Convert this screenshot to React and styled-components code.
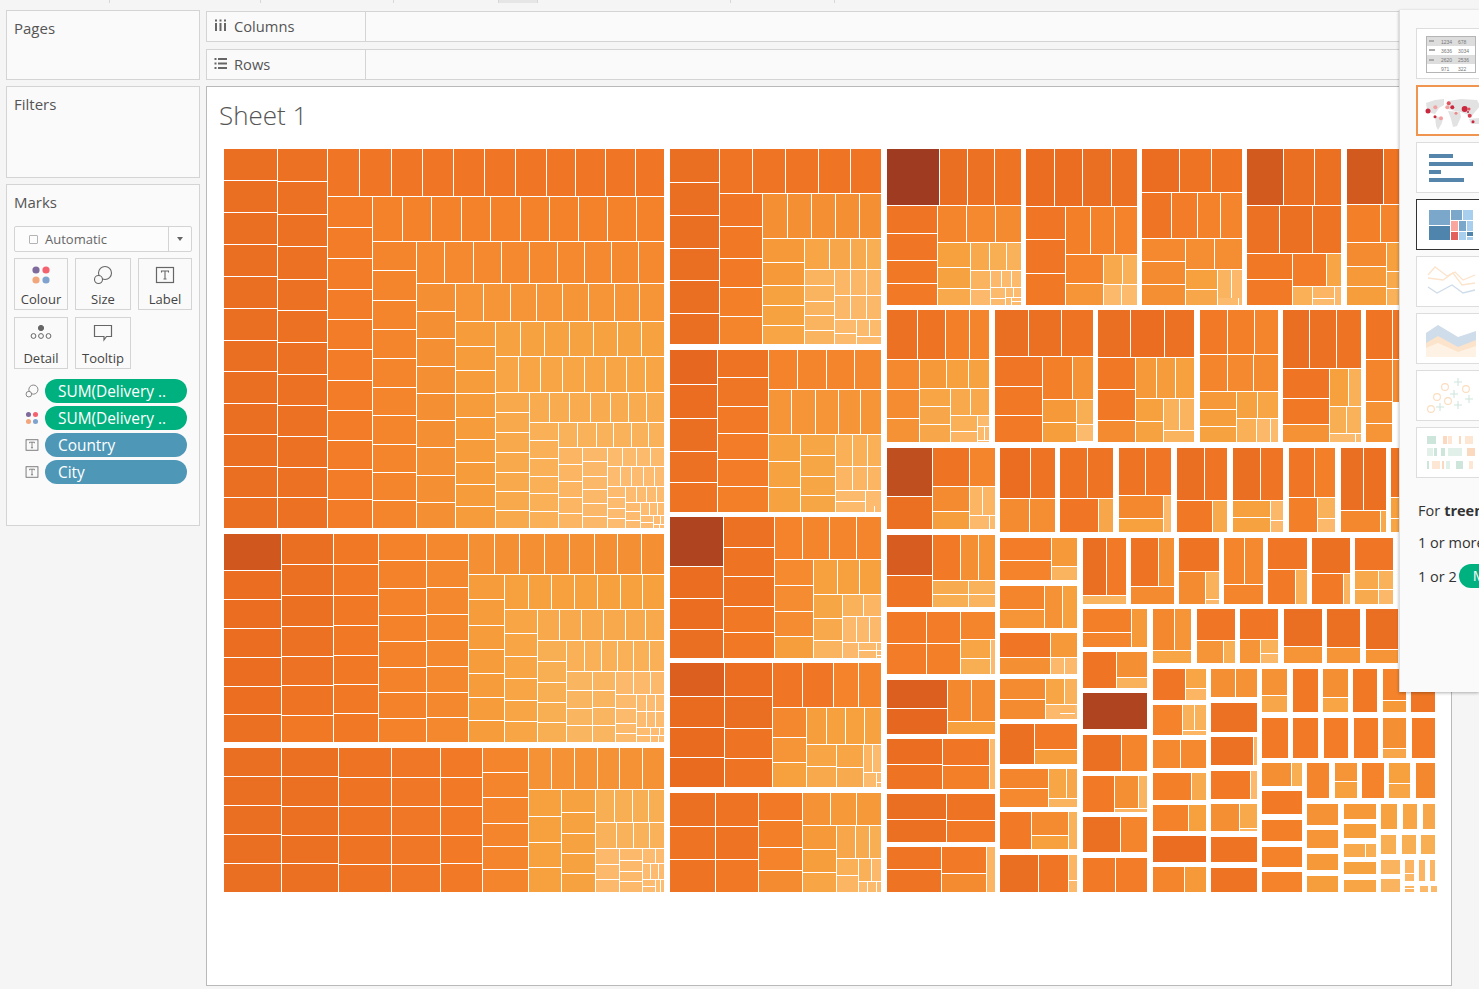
import React from 'react';
import styled, { createGlobalStyle } from 'styled-components';

const GlobalStyle = createGlobalStyle`
    html, body {
        margin: 0;
        height: 100%;
        overflow: hidden;
        background: #F5F5F5;
        font-family: "Open Sans", "Liberation Sans", sans-serif;
    }
`;

const Page = styled.div`
    position: relative;
    width: 1479px;
    height: 989px;
    overflow: hidden;
`;

const TopBar = styled.div`
    display: flex;
    height: 10px;
    align-items: flex-start;
`;

const TopTab = styled.div`
    flex: none;
    width: ${(p) => p.$w}px;
    height: 3px;
    box-sizing: border-box;
    border-right: 1px solid #D8D8D8;
    background: ${(p) => (p.$on ? '#E6E6E6' : 'transparent')};
`;

const Main = styled.div`
    display: flex;
    gap: 6px;
    padding-left: 6px;
`;

const LeftColumn = styled.div`
    flex: none;
    width: 194px;
    display: flex;
    flex-direction: column;
    gap: 6px;
`;

const Card = styled.div`
    box-sizing: border-box;
    height: ${(p) => p.$h}px;
    padding: 0 7px;
    background: #FAFAFA;
    border: 1px solid #D4D4D4;
`;

const CardTitle = styled.div`
    font-size: 15px;
    line-height: 20px;
    padding-top: 7px;
    color: #555;
`;

const TypeSelect = styled.div`
    display: flex;
    align-items: center;
    height: 24px;
    margin-top: 14px;
    background: #FCFCFC;
    border: 1px solid #D4D4D4;
    border-radius: 2px;
    font-size: 13px;
    color: #666;
`;

const TypeBox = styled.span`
    width: 7px;
    height: 7px;
    margin: 0 7px 0 14px;
    border: 1px solid #B4B4B4;
    border-radius: 1px;
`;

const TypeName = styled.span`
    flex: 1;
`;

const TypeCaret = styled.span`
    display: flex;
    align-items: center;
    justify-content: center;
    align-self: stretch;
    width: 22px;
    border-left: 1px solid #D4D4D4;
    &::after {
        content: '';
        border-left: 3.5px solid transparent;
        border-right: 3.5px solid transparent;
        border-top: 4px solid #666;
    }
`;

const MarkGrid = styled.div`
    display: grid;
    grid-template-columns: 54px 56px 54px;
    grid-auto-rows: 52px;
    gap: 7px;
    margin-top: 6px;
`;

const MarkButton = styled.div`
    display: flex;
    flex-direction: column;
    align-items: center;
    justify-content: space-between;
    box-sizing: border-box;
    padding: 6px 0 1px;
    background: #FAFAFA;
    border: 1px solid #D4D4D4;
    font-size: 13px;
    line-height: 18px;
    color: #444;
`;

const PillList = styled.div`
    display: flex;
    flex-direction: column;
    gap: 3px;
    margin-top: 10px;
`;

const PillRow = styled.div`
    display: flex;
    align-items: center;
    gap: 6px;
    padding-left: 11px;
`;

const PillIcon = styled.span`
    display: flex;
    justify-content: center;
    width: 14px;
`;

const Pill = styled.div`
    width: 142px;
    height: 24px;
    box-sizing: border-box;
    padding-left: 13px;
    border-radius: 12px;
    background: ${(p) => (p.$measure ? '#00B180' : '#4E97B7')};
    color: #fff;
    font-size: 15.4px;
    line-height: 26px;
    white-space: nowrap;
`;

const RightColumn = styled.div`
    flex: none;
    width: 1246px;
    display: flex;
    flex-direction: column;
`;

const Shelf = styled.div`
    display: flex;
    height: 31px;
    box-sizing: border-box;
    margin-top: ${(p) => p.$top}px;
    background: #FAFAFA;
    border: 1px solid #D4D4D4;
`;

const ShelfLabel = styled.div`
    display: flex;
    align-items: center;
    gap: 7px;
    width: 159px;
    box-sizing: border-box;
    padding: 0 0 2px 7px;
    border-right: 1px solid #D4D4D4;
    font-size: 14.7px;
    color: #555;
`;

const Sheet = styled.div`
    box-sizing: border-box;
    height: 900px;
    margin-top: 6px;
    padding: 0 0 0 17px;
    background: #fff;
    border: 1px solid #B9B9B9;
`;

const SheetTitle = styled.div`
    height: 62px;
    margin-left: -5px;
    padding-top: 11px;
    box-sizing: border-box;
    font-size: 26px;
    line-height: 34px;
    font-weight: 300;
    color: #555;
`;

const ChartSvg = styled.svg`
    display: block;
    width: 1214px;
    height: 744px;
`;

const ShowMe = styled.div`
    position: absolute;
    top: 10px;
    left: 1399px;
    width: 80px;
    height: 682px;
    box-sizing: border-box;
    padding: 18px 0 0 16px;
    overflow: hidden;
    background: #FAFAFA;
    border-left: 1px solid #DDD;
    box-shadow: 0 1px 3px rgba(0, 0, 0, 0.3);
`;

const ThumbList = styled.div`
    display: flex;
    flex-direction: column;
    gap: 6px;
`;

const Thumb = styled.div`
    box-sizing: border-box;
    width: 70px;
    height: 51px;
    background: #fff;
    border: ${(p) => (p.$state === 'hot' ? '2px solid #F0954F' : p.$state === 'on' ? '1px solid #333' : '1px solid #DDD')};
    svg {
        display: block;
        margin: -1px;
    }
`;

const HintLine = styled.div`
    display: flex;
    align-items: center;
    height: 24px;
    margin-top: ${(p) => p.$top}px;
    margin-left: 2px;
    font-size: 14.5px;
    color: #333;
    white-space: nowrap;
    b {
        margin-left: 4px;
        font-weight: 700;
    }
`;

const HintPill = styled.span`
    margin-left: 2px;
    padding: 0 12px 0 14px;
    height: 24px;
    border-radius: 12px;
    background: #00B180;
    color: #fff;
    line-height: 24px;
`;

// colour ramp of the treemap, t < 0 goes to the brown marks
const stops = [
    [-1, [158, 59, 32]],
    [-0.7, [175, 69, 32]],
    [-0.4, [208, 88, 31]],
    [-0.2, [221, 95, 31]],
    [0, [233, 107, 32]],
    [0.2, [242, 122, 38]],
    [0.35, [245, 139, 48]],
    [0.5, [246, 160, 62]],
    [0.65, [248, 174, 82]],
    [0.8, [252, 185, 107]],
    [1, [253, 189, 114]],
];

const ramp = (t) => {
    for (let i = 1; i < stops.length; i++) {
        if (t <= stops[i][0]) {
            const [a, ca] = stops[i - 1];
            const [b, cb] = stops[i];
            const k = (t - a) / (b - a);
            return `rgb(${ca.map((c, n) => Math.round(c + (cb[n] - c) * k)).join(',')})`;
        }
    }
    return 'rgb(253,189,114)';
};

// strips in the 3x crop coordinates they were measured in
const v = (a, b, cuts, t) => ({ dir: 'v', a, b, cuts, t });
const h = (a, b, cuts, t) => ({ dir: 'h', a, b, cuts, t });

const regions = [
    { ox: 215, oy: 140, items: [
        v(27, 186, [27, 122, 218, 314, 410, 506, 602, 695, 791, 884, 980, 1073, 1164], 0.05),
        v(188, 336, [27, 125, 224, 320, 419, 512, 608, 704, 797, 890, 983, 1073, 1164], 0.08),
        h(27, 168, [338, 434, 530, 623, 716, 809, 902, 995, 1082, 1172, 1262, 1347], 0.15),
        v(338, 471, [170, 263, 356, 449, 539, 629, 722, 812, 902, 989, 1079, 1164], 0.22),
        h(170, 303, [473, 563, 650, 740, 827, 917, 1004, 1091, 1178, 1265, 1347], 0.27),
        v(473, 603, [305, 392, 482, 569, 656, 743, 827, 914, 998, 1082, 1164], 0.3),
        h(305, 429, [605, 689, 776, 860, 944, 1028, 1109, 1190, 1271, 1347], 0.33),
        v(605, 720, [431, 515, 596, 680, 761, 842, 923, 1007, 1088, 1164], 0.38),
        h(431, 543, [722, 806, 887, 965, 1043, 1121, 1199, 1274, 1347], 0.42),
        v(722, 840, [545, 620, 692, 761, 833, 899, 968, 1034, 1100, 1164], 0.47),
        h(545, 648, [842, 917, 989, 1064, 1136, 1208, 1280, 1347], 0.52),
        h(650, 756, [842, 911, 977, 1043, 1109, 1172, 1235, 1292, 1347], 0.55),
        v(842, 942, [758, 818, 878, 938, 998, 1055, 1112, 1164], 0.6),
        h(758, 846, [944, 1004, 1064, 1127, 1187, 1241, 1295, 1347], 0.63),
        v(944, 1029, [848, 902, 956, 1010, 1061, 1115, 1164], 0.68),
        h(848, 921, [1031, 1088, 1145, 1196, 1250, 1301, 1347], 0.7),
        v(1031, 1101, [923, 974, 1025, 1073, 1121, 1164], 0.75),
        v(1103, 1176, [923, 965, 1010, 1049, 1091, 1130, 1164], 0.78),
        h(923, 978, [1178, 1223, 1265, 1307, 1347], 0.85),
        h(980, 1038, [1178, 1217, 1250, 1286, 1319, 1347], 0.88),
        v(1178, 1230, [1040, 1073, 1106, 1136, 1164], 0.9),
        h(1040, 1086, [1232, 1265, 1295, 1325, 1347], 0.92),
        v(1232, 1275, [1088, 1115, 1142, 1164], 0.92),
        h(1088, 1125, [1277, 1304, 1328, 1347], 0.95),
        v(1277, 1314, [1127, 1148, 1164], 0.95),
        h(1127, 1152, [1316, 1337, 1347], 0.97),
        h(1154, 1164, [1316, 1334, 1347], 0.97),
    ] },
    { ox: 215, oy: 525, items: [
        v(27, 199, [27, 137, 224, 311, 398, 485, 569, 651], [-0.4, 0.02, 0.02, 0.03, 0.03, 0.04, 0.06]),
        v(201, 355, [27, 119, 212, 305, 395, 482, 572, 651], [0.05, 0.07, 0.07, 0.08, 0.09, 0.1, 0.17]),
        v(357, 490, [27, 119, 212, 302, 392, 479, 566, 651], 0.17),
        v(492, 634, [27, 107, 191, 272, 350, 428, 503, 581, 651], 0.27),
        v(636, 760, [27, 107, 188, 269, 347, 425, 503, 578, 651], 0.32),
        h(27, 148, [762, 839, 914, 989, 1064, 1139, 1208, 1280, 1347], 0.38),
        v(762, 868, [150, 224, 302, 374, 446, 518, 587, 651], 0.47),
        h(150, 252, [870, 941, 1010, 1079, 1148, 1217, 1283, 1347], 0.5),
        v(870, 967, [254, 326, 395, 461, 527, 590, 651], 0.55),
        h(254, 345, [968, 1034, 1100, 1166, 1232, 1292, 1347], 0.6),
        v(968, 1053, [347, 410, 473, 533, 593, 651], 0.66),
        h(347, 438, [1055, 1109, 1160, 1208, 1256, 1304, 1347], 0.68),
        v(1055, 1132, [440, 497, 551, 602, 651], 0.74),
        v(1133, 1200, [440, 497, 548, 602, 651], 0.74),
        h(440, 508, [1202, 1256, 1307, 1347], 0.82),
        v(1202, 1264, [510, 551, 596, 626, 651], 0.85),
        h(510, 558, [1265, 1295, 1322, 1347], 0.9),
        h(560, 606, [1265, 1295, 1322, 1347], 0.9),
        h(608, 630, [1265, 1307, 1334, 1347], 0.93),
        h(632, 651, [1265, 1307, 1331, 1347], 0.95),
        v(27, 199, [669, 755, 842, 929, 1016, 1101], 0.05),
        v(201, 370, [669, 755, 845, 932, 1016, 1101], 0.07),
        v(372, 529, [669, 758, 845, 932, 1019, 1101], 0.1),
        v(531, 676, [669, 758, 845, 932, 1019, 1101], 0.16),
        v(678, 802, [669, 758, 845, 932, 1016, 1101], 0.2),
        v(804, 940, [669, 743, 818, 896, 965, 1034, 1101], 0.3),
        h(669, 792, [942, 1010, 1079, 1148, 1214, 1283, 1347], 0.4),
        v(942, 1038, [794, 875, 953, 1028, 1101], 0.5),
        v(1040, 1140, [794, 863, 926, 986, 1046, 1101], 0.52),
        h(794, 891, [1142, 1199, 1253, 1301, 1347], 0.65),
        h(893, 969, [1142, 1205, 1256, 1304, 1347], 0.7),
        v(1142, 1212, [971, 1019, 1064, 1101], 0.8),
        v(1214, 1282, [971, 1007, 1040, 1070, 1101], 0.8),
        h(971, 1014, [1283, 1322, 1347], 0.88),
        h(1016, 1062, [1283, 1307, 1331, 1347], 0.92),
        v(1283, 1321, [1064, 1085, 1101], 0.92),
        h(1064, 1101, [1323, 1337, 1347], 0.95),
    ] },
    { ox: 665, oy: 140, items: [
        v(15, 162, [27, 128, 227, 326, 422, 521, 612], 0.05),
        h(27, 159, [164, 263, 362, 461, 557, 648], 0.13),
        v(164, 291, [161, 260, 356, 443, 530, 612], [0.15, 0.18, 0.2, 0.25, 0.3]),
        h(161, 294, [293, 368, 440, 512, 584, 648], 0.38),
        v(293, 417, [296, 368, 437, 497, 557, 612], [0.45, 0.45, 0.52, 0.52, 0.55]),
        h(296, 387, [419, 494, 557, 605, 648], [0.55, 0.58, 0.62, 0.65]),
        v(419, 507, [389, 437, 485, 527, 572, 612], 0.72),
        h(389, 465, [509, 557, 605, 648], 0.77),
        h(467, 537, [509, 557, 605, 648], 0.78),
        v(509, 573, [539, 581, 612], 0.85),
        h(539, 588, [575, 614, 648], 0.87),
        h(590, 612, [575, 648], 0.9),
        v(15, 156, [630, 734, 836, 935, 1028, 1116], [-0.05, 0.03, 0.05, 0.08, 0.1]),
        v(158, 309, [630, 713, 800, 881, 959, 1040, 1116], [0.12, 0.14, 0.2, 0.22, 0.22, 0.24]),
        h(630, 747, [311, 398, 485, 569, 648], [0.28, 0.3, 0.3, 0.32]),
        h(749, 882, [311, 380, 452, 521, 587, 648], 0.42),
        v(311, 405, [884, 965, 1043, 1116], 0.52),
        v(407, 510, [884, 947, 1010, 1067, 1116], 0.56),
        h(884, 978, [512, 563, 608, 648], 0.68),
        h(980, 1050, [512, 563, 608, 648], 0.75),
        v(512, 600, [1052, 1085, 1116], 0.85),
        v(602, 648, [1052, 1097], 0.88),
        h(1097, 1116, [602, 629, 648], 0.9),
        h(27, 195, [666, 825, 908, 989, 1068], [-1, 0.05, 0.08, 0.1]),
        v(666, 816, [197, 281, 362, 431, 495], [0.13, 0.15, 0.17, 0.2]),
        h(197, 306, [818, 905, 992, 1068], [0.3, 0.33, 0.35]),
        v(818, 915, [308, 383, 446, 495], [0.5, 0.52, 0.6]),
        h(308, 390, [917, 974, 1025, 1068], [0.6, 0.65, 0.7]),
        v(917, 975, [392, 449, 495], [0.72, 0.8]),
        h(392, 441, [977, 1010, 1040, 1068], [0.82, 0.85, 0.85]),
        v(977, 1020, [443, 476, 495], 0.85),
        h(443, 471, [1022, 1046, 1068], [0.85, 0.88]),
        h(473, 495, [1022, 1038], 0.85),
        v(1040, 1068, [473, 485, 495], 0.9),
        h(510, 657, [666, 759, 843, 915, 972], [0.08, 0.12, 0.25, 0.3]),
        v(666, 762, [659, 749, 836, 906], [0.33, 0.36, 0.4]),
        h(659, 744, [764, 845, 911, 972], [0.45, 0.5, 0.52]),
        v(764, 855, [746, 800, 854, 906], [0.55, 0.58, 0.58]),
        h(746, 825, [857, 917, 972], 0.6),
        v(857, 936, [827, 875, 906], [0.68, 0.75]),
        h(827, 858, [938, 972], 0.85),
        h(860, 900, [938, 959, 972], 0.85),
        h(902, 906, [938, 972], 0.9),
    ] },
    { ox: 665, oy: 510, items: [
        v(15, 174, [21, 170, 266, 359, 444], [-0.72, 0.03, 0.03, 0.05]),
        v(176, 327, [21, 113, 200, 290, 368, 444], [0.08, 0.1, 0.1, 0.17, 0.18]),
        h(21, 147, [329, 413, 494, 575, 648], [0.28, 0.3, 0.3, 0.3]),
        v(329, 444, [149, 227, 305, 380, 444], [0.34, 0.36, 0.36, 0.48]),
        h(149, 252, [446, 518, 584, 648], 0.5),
        v(446, 531, [254, 326, 392, 444], [0.56, 0.6, 0.72]),
        h(254, 318, [533, 596, 648], [0.7, 0.75]),
        h(320, 396, [533, 575, 614, 648], 0.8),
        v(533, 579, [398, 444], 0.82),
        v(581, 633, [398, 422, 444], 0.85),
        v(635, 648, [398, 422, 438, 444], 0.9),
        v(15, 177, [459, 560, 653, 743, 831], [-0.2, 0, 0, 0]),
        v(179, 321, [459, 560, 656, 746, 831], [0.03, 0.05, 0.1, 0.1]),
        h(459, 591, [323, 413, 506, 581, 648], [0.15, 0.15, 0.28, 0.3]),
        v(323, 424, [593, 683, 758, 831], [0.32, 0.42, 0.5]),
        h(593, 702, [426, 485, 542, 599, 648], [0.48, 0.5, 0.5, 0.52]),
        v(425, 513, [704, 770, 831], [0.55, 0.6]),
        v(515, 594, [704, 773, 831], [0.55, 0.62]),
        h(704, 786, [596, 623, 648], [0.75, 0.85]),
        h(788, 831, [596, 634], 0.85),
        v(635, 648, [788, 818, 831], 0.88),
        v(15, 150, [849, 950, 1049, 1146], [0.07, 0.1, 0.12]),
        v(152, 280, [849, 950, 1049, 1146], [0.1, 0.12, 0.17]),
        v(281, 412, [849, 932, 1013, 1082, 1146], [0.2, 0.25, 0.28, 0.35]),
        h(849, 945, [413, 497, 575, 648], [0.4, 0.45, 0.45]),
        v(413, 514, [947, 1019, 1088, 1146], [0.45, 0.48, 0.55]),
        h(947, 1044, [515, 572, 614, 648], [0.58, 0.62, 0.65]),
        v(515, 580, [1046, 1097, 1146], [0.68, 0.75]),
        h(1046, 1113, [581, 620, 648], [0.68, 0.8]),
        h(1115, 1146, [581, 608, 635, 648], 0.85),
    ] },
    { ox: 1020, oy: 140, items: [
        h(27, 198, [18, 105, 189, 276, 351], [0.02, 0.03, 0.05, 0.08]),
        v(18, 135, [200, 299, 401, 495], [0.15, 0.15, 0.18]),
        h(200, 342, [137, 212, 284, 351], [0.25, 0.27, 0.28]),
        v(137, 249, [344, 431, 495], [0.28, 0.42]),
        h(344, 432, [251, 308, 351], [0.6, 0.68]),
        h(434, 495, [251, 305, 351], [0.8, 0.85]),
        h(27, 156, [366, 479, 575, 666], [0.03, 0.12, 0.12]),
        h(158, 294, [366, 455, 533, 602, 666], [0.13, 0.22, 0.27, 0.3]),
        v(366, 495, [296, 365, 434, 495], [0.33, 0.35, 0.38]),
        h(296, 387, [497, 584, 666], 0.37),
        v(497, 591, [389, 449, 495], [0.5, 0.58]),
        h(389, 473, [593, 635, 666], [0.72, 0.8]),
        h(475, 495, [593, 656, 666], [0.85, 0.88]),
        h(27, 195, [681, 792, 884, 963], [-0.35, 0.05, 0.07]),
        h(197, 339, [681, 779, 878, 963], [0.08, 0.07, 0.1]),
        v(681, 816, [341, 419, 495], [0.18, 0.2]),
        h(341, 438, [818, 920, 963], [0.22, 0.55]),
        h(440, 495, [818, 876], 0.68),
        v(878, 942, [440, 476, 495], [0.75, 0.85]),
        h(440, 495, [944, 963], 0.8),
        h(27, 192, [981, 1091, 1137], [-0.35, 0.1]),
        h(194, 306, [981, 1082, 1137], [0.25, 0.3]),
        v(981, 1098, [308, 380, 440, 495], [0.35, 0.45, 0.48]),
        v(1100, 1137, [308, 395, 446, 495], [0.5, 0.6, 0.7]),
        h(510, 648, [-75, 26, 125, 219], [0.05, 0.07, 0.12]),
        v(-75, 66, [650, 740, 827, 906], [0.15, 0.17, 0.2]),
        h(650, 777, [68, 158, 219], [0.25, 0.4]),
        v(68, 168, [779, 848, 906], [0.45, 0.48]),
        v(170, 219, [779, 854, 903], [0.65, 0.85]),
        h(510, 651, [234, 332, 434, 522], [0.05, 0.03, 0.08]),
        v(234, 345, [653, 749, 842, 906], [0.17, 0.18, 0.35]),
        h(653, 774, [347, 410, 467, 522], [0.45, 0.47, 0.5]),
        v(347, 429, [776, 845, 906], [0.5, 0.52]),
        h(776, 870, [431, 479, 522], [0.7, 0.72]),
        h(872, 906, [431, 522], 0.72),
        h(510, 642, [540, 623, 704, 774], [0.2, 0.25, 0.3]),
        h(644, 753, [540, 623, 701, 774], [0.3, 0.33, 0.35]),
        v(540, 648, [755, 809, 860, 906], [0.45, 0.48, 0.52]),
        h(755, 834, [650, 713, 774], [0.52, 0.55]),
        h(836, 906, [650, 711, 752, 774], [0.68, 0.78, 0.85]),
        h(510, 684, [789, 869, 950, 1023], [0.05, 0.08, 0.12]),
        v(789, 927, [686, 776, 854, 906], [0.13, 0.18, 0.4]),
        h(686, 798, [929, 986, 1023], [0.5, 0.68]),
        h(800, 879, [929, 980, 1023], [0.65, 0.7]),
        h(881, 906, [929, 1007, 1023], 0.85),
        v(1038, 1116, [510, 659, 785, 851, 906], [0.13, 0.3, 0.4, 0.42]),
        v(1118, 1137, [510, 659, 785], [0.15, 0.35]),
    ] },
    { ox: 880, oy: 440, items: [
        v(21, 156, [24, 170, 267], [-0.55, 0.07]),
        h(24, 138, [158, 269, 345], [0.12, 0.3]),
        v(158, 267, [140, 215, 267], [0.35, 0.48]),
        h(140, 225, [269, 309, 345], 0.75),
        h(227, 267, [269, 329, 345], [0.8, 0.85]),
        v(21, 156, [285, 407, 501], [-0.3, 0.1]),
        h(285, 420, [158, 242, 296, 345], [0.2, 0.38, 0.42]),
        h(422, 462, [158, 266, 345], [0.62, 0.7]),
        h(464, 501, [158, 266, 345], [0.65, 0.72]),
        v(21, 138, [516, 611, 702], [0.2, 0.22]),
        v(140, 240, [516, 611, 702], [0.22, 0.24]),
        h(516, 597, [242, 345], 0.3),
        v(242, 330, [599, 656, 702], [0.55, 0.65]),
        v(332, 345, [599, 702], 0.85),
        v(21, 202, [720, 806, 882], [-0.2, -0.05]),
        h(720, 843, [204, 275, 345], [0.32, 0.35]),
        h(845, 882, [204, 345], 0.5),
        v(21, 187, [897, 974, 1047], [0.03, 0.12]),
        v(189, 327, [897, 977, 1047], [0.15, 0.25]),
        v(329, 345, [897, 1047], 0.85),
        v(21, 198, [1062, 1139, 1206], [0.05, 0.07]),
        v(200, 345, [1062, 1142, 1206], [0.12, 0.2]),
        v(21, 183, [1221, 1289, 1356], [0.13, 0.12]),
        v(185, 318, [1221, 1301, 1356], [0.2, 0.35]),
        v(320, 345, [1221, 1356], 0.75),
    ] },
    { ox: 995, oy: 440, items: [
        h(24, 174, [15, 107, 180], [0.03, 0.12]),
        h(176, 276, [15, 104, 180], [0.35, 0.37]),
        h(24, 174, [195, 279, 354], [0.1, 0.12]),
        h(176, 276, [195, 312, 354], [0.15, 0.58]),
        h(24, 165, [372, 453, 528], [0.12, 0.15]),
        v(372, 504, [167, 236, 276], [0.32, 0.5]),
        v(506, 528, [167, 276], 0.82),
        h(24, 180, [546, 630, 696], [0.05, 0.13]),
        h(182, 276, [546, 654, 696], [0.18, 0.6]),
        h(24, 180, [714, 798, 864], [0.05, 0.13]),
        v(714, 826, [182, 233, 276], [0.5, 0.52]),
        v(828, 864, [182, 242, 276], [0.78, 0.82]),
        h(24, 171, [882, 960, 1020], [0.15, 0.25]),
        v(882, 966, [173, 276], 0.25),
        v(968, 1020, [173, 236, 276], [0.7, 0.82]),
        h(24, 210, [1038, 1107, 1173], [0.05, 0.07]),
        h(212, 276, [1038, 1157, 1173], [0.32, 0.6]),
        v(1188, 1215, [24, 173, 236, 276], [0.12, 0.5, 0.55]),
    ] },
    { ox: 1000, oy: 530, items: [
        v(0, 153, [24, 92, 150], [0.22, 0.28]),
        v(155, 231, [24, 110, 150], [0.45, 0.72]),
        v(0, 132, [168, 239, 294], [0.3, 0.42]),
        h(168, 294, [134, 188, 231], [0.4, 0.5]),
        h(309, 382, [0, 153, 231], [0.15, 0.45]),
        h(384, 432, [0, 153, 195, 231], [0.38, 0.82, 0.8]),
        v(0, 135, [447, 509, 567], 0.35),
        h(447, 522, [137, 195, 231], [0.55, 0.7]),
        h(524, 567, [137, 179], 0.82),
        v(179, 224, [524, 551, 567], [0.75, 0.8]),
        h(524, 567, [226, 231], 0.85),
        v(0, 102, [582, 702], 0.07),
        v(104, 231, [582, 661, 702], [0.2, 0.48]),
        v(0, 144, [717, 776, 831], [0.3, 0.33]),
        h(717, 804, [146, 201, 231], [0.55, 0.58]),
        h(806, 831, [146, 231], 0.72),
        v(0, 93, [846, 957], 0.2),
        v(95, 204, [846, 917, 957], [0.35, 0.5]),
        v(206, 231, [846, 957], 0.7),
        v(0, 114, [975, 1086], 0.05),
        v(116, 204, [975, 1086], 0.15),
        v(206, 231, [975, 1053, 1086], [0.75, 0.8]),

        h(24, 195, [249, 321, 378], [0.05, 0.2]),
        h(197, 222, [249, 378], 0.72),
        h(24, 168, [393, 477, 522], [0.1, 0.38]),
        h(170, 222, [393, 522], 0.35),
        h(24, 123, [537, 657], 0.1),
        h(125, 222, [537, 616], 0.35),
        v(618, 657, [125, 209, 222], [0.7, 0.82]),
        h(24, 162, [672, 735, 789], [0.3, 0.33]),
        h(164, 222, [672, 789], 0.3),
        h(24, 117, [804, 921], 0.15),
        h(119, 222, [804, 888, 921], [0.2, 0.68]),
        h(24, 129, [936, 1050], 0.07),
        h(131, 222, [936, 1032, 1050], [0.2, 0.72]),
        h(24, 120, [1065, 1179], 0.15),
        h(122, 177, [1065, 1137, 1179], [0.6, 0.7]),
        h(179, 222, [1065, 1137, 1179], [0.62, 0.78]),

        v(249, 393, [237, 308, 351], [0.25, 0.3]),
        v(396, 441, [237, 351], 0.45),
        h(237, 360, [459, 525, 573], [0.32, 0.42]),
        h(362, 399, [459, 573], 0.55),
        h(237, 330, [591, 705], 0.15),
        h(332, 399, [591, 672, 705], [0.42, 0.65]),
        h(237, 327, [720, 834], 0.15),
        h(329, 399, [720, 781], 0.42),
        v(783, 834, [329, 371, 399], [0.7, 0.78]),
        v(852, 966, [237, 350, 399], [0.05, 0.42]),
        v(981, 1080, [237, 353, 399], [0.07, 0.42]),
        v(1098, 1194, [237, 359, 399], [0.05, 0.42]),

        v(249, 348, [366, 474], 0.13),
        v(351, 441, [366, 443, 474], [0.38, 0.7]),
        v(249, 441, [489, 597], -0.7),
        h(615, 723, [249, 366, 441], [0.07, 0.3]),
        v(249, 342, [738, 846], 0.2),
        h(738, 835, [345, 417, 441], [0.38, 0.72]),
        h(837, 846, [345, 441], 0.75),
        h(861, 966, [249, 363, 441], [0.07, 0.3]),
        h(984, 1086, [249, 348, 441], [0.2, 0.22]),

        v(459, 555, [417, 510], 0.15),
        v(558, 618, [417, 476, 510], [0.55, 0.75]),
        v(459, 546, [525, 615], 0.28),
        h(525, 600, [549, 584, 618], 0.7),
        h(602, 615, [549, 618], 0.75),
        h(630, 714, [459, 543, 618], 0.33),
        h(729, 810, [459, 576, 618], [0.25, 0.62]),
        h(825, 903, [459, 567, 618], [0.27, 0.5]),
        h(918, 996, [459, 618], 0.03),
        h(1011, 1086, [459, 555, 618], [0.3, 0.45]),

        h(417, 501, [633, 708, 771], [0.38, 0.4]),
        h(519, 606, [633, 771], 0.08),
        h(621, 705, [633, 762, 771], [0.08, 0.75]),
        h(723, 807, [633, 753, 771], [0.2, 0.8]),
        v(633, 717, [822, 903], 0.38),
        v(720, 771, [822, 898, 903], [0.6, 0.75]),
        h(921, 996, [633, 771], 0.1),
        h(1014, 1086, [633, 771], 0.12),

        v(786, 861, [417, 497, 546], [0.4, 0.58]),
        v(879, 954, [417, 546], 0.17),
        v(969, 1044, [417, 503, 546], [0.38, 0.55]),
        v(1059, 1131, [417, 546], 0.17),
        v(1149, 1218, [417, 513, 546], [0.28, 0.45]),
        v(1233, 1305, [417, 546], 0.14),
        v(786, 864, [564, 684], 0.2),
        v(879, 954, [564, 684], 0.2),
        v(972, 1044, [564, 684], 0.22),
        v(1062, 1134, [564, 684], 0.22),
        v(1149, 1218, [564, 658, 684], [0.38, 0.58]),
        v(1236, 1305, [564, 684], 0.22),
        h(699, 768, [786, 876, 906], [0.38, 0.65]),
        h(783, 852, [786, 906], 0.2),
        h(870, 933, [786, 906], 0.25),
        h(951, 1011, [786, 906], 0.27),
        h(1026, 1086, [786, 906], 0.28),
        v(921, 987, [699, 804], 0.3),
        v(1005, 1071, [699, 757, 804], [0.42, 0.5]),
        v(1086, 1152, [699, 804], 0.28),
        v(1167, 1230, [699, 763, 804], [0.5, 0.55]),
        v(1248, 1305, [699, 804], 0.32),
        v(921, 1014, [822, 885], 0.4),
        v(921, 1014, [900, 954], 0.42),
        v(921, 1014, [972, 1020], 0.45),
        v(921, 1014, [1038, 1086], 0.48),
        v(1032, 1128, [822, 867], 0.45),
        v(1032, 1128, [882, 924], 0.48),
        h(942, 981, [1032, 1098, 1128], [0.6, 0.65]),
        v(1032, 1128, [996, 1032], 0.52),
        v(1032, 1128, [1050, 1086], 0.55),
        v(1143, 1191, [822, 897], 0.52),
        v(1209, 1251, [822, 897], 0.55),
        v(1269, 1305, [822, 897], 0.58),
        v(1143, 1188, [915, 972], 0.65),
        v(1206, 1248, [915, 972], 0.65),
        v(1263, 1305, [915, 972], 0.65),
        v(1143, 1200, [990, 1032], 0.72),
        v(1143, 1200, [1047, 1086], 0.72),
        v(1215, 1242, [990, 1032, 1053], [0.75, 0.78]),
        v(1257, 1275, [990, 1053], 0.75),
        v(1290, 1305, [990, 1053], 0.75),
        v(1215, 1242, [1068, 1076, 1086], 0.75),
        v(1260, 1284, [1068, 1086], 0.78),
        v(1293, 1311, [1068, 1086], 0.78),
    ] },
];

const buildCells = () => {
    const cells = [];
    regions.forEach(({ ox, oy, items }) => {
        const px = (z) => Math.round(ox + z / 3);
        const py = (z) => Math.round(oy + z / 3);
        items.forEach(({ dir, a, b, cuts, t }) => {
            cuts.slice(0, -1).forEach((start, i) => {
                const last = i === cuts.length - 2;
                const tone = Array.isArray(t) ? t[Math.min(i, t.length - 1)] : t;
                const across = dir === 'v' ? px : py;
                const along = dir === 'v' ? py : px;
                const s0 = across(a);
                const s1 = across(b);
                const l0 = along(start);
                const l1 = along(cuts[i + 1]) - (last ? 0 : 1);
                cells.push(dir === 'v'
                    ? { x: s0, y: l0, w: s1 - s0, h: l1 - l0, fill: ramp(tone) }
                    : { x: l0, y: s0, w: l1 - l0, h: s1 - s0, fill: ramp(tone) });
            });
        });
    });
    return cells;
};

const Treemap = () => (
    <ChartSvg viewBox="224 149 1214 744" shapeRendering="crispEdges">
        {buildCells().map((c, i) => (
            <rect key={i} x={c.x} y={c.y} width={c.w} height={c.h} fill={c.fill} />
        ))}
    </ChartSvg>
);

const ColourIcon = ({ size = 20 }) => (
    <svg width={size} height={size} viewBox="0 0 20 20">
        <circle cx="5" cy="5" r="3.6" fill="#7E6A9B" />
        <circle cx="15" cy="5" r="3.6" fill="#F4616F" />
        <circle cx="5" cy="15" r="3.6" fill="#F2A77B" />
        <circle cx="15" cy="15" r="3.6" fill="#7FA3CE" />
    </svg>
);

const SizeIcon = ({ size = 20 }) => (
    <svg width={size} height={size} viewBox="0 0 20 20" fill="none" stroke="#666" strokeWidth="1.1">
        <circle cx="12" cy="8" r="6.5" />
        <circle cx="5.5" cy="14.5" r="4" fill="#FAFAFA" />
    </svg>
);

const TextIcon = ({ size = 20 }) => (
    <svg width={size} height={size} viewBox="0 0 20 20" fill="none" stroke="#666">
        <rect x="1.5" y="2.5" width="17" height="15" strokeWidth="1.2" />
        <path d="M6.5 7.5V6h7v1.5M10 6v8M8.5 14h3" strokeWidth="1.1" />
    </svg>
);

const DetailIcon = () => (
    <svg width="22" height="16" viewBox="0 0 22 16" fill="none" stroke="#666" strokeWidth="1">
        <circle cx="11" cy="4" r="2.6" fill="#666" />
        <circle cx="3.5" cy="12" r="2.4" />
        <circle cx="11" cy="12" r="2.4" />
        <circle cx="18.5" cy="12" r="2.4" />
    </svg>
);

const TooltipIcon = () => (
    <svg width="20" height="18" viewBox="0 0 20 18" fill="none" stroke="#666" strokeWidth="1.2">
        <path d="M1.5 1.5h17v11h-5l-2.5 3.5v-3.5H1.5z" />
    </svg>
);

const ColumnsIcon = () => (
    <svg width="13" height="13" viewBox="0 0 13 13" fill="#666">
        <rect x="1" y="0.5" width="2" height="2" />
        <rect x="1" y="4" width="2" height="8" />
        <rect x="5.5" y="0.5" width="2" height="2" />
        <rect x="5.5" y="4" width="2" height="8" />
        <rect x="10" y="0.5" width="2" height="2" />
        <rect x="10" y="4" width="2" height="8" />
    </svg>
);

const RowsIcon = () => (
    <svg width="13" height="13" viewBox="0 0 13 13" fill="#666">
        <rect x="0.5" y="1" width="2" height="2" />
        <rect x="4" y="1" width="9" height="2" />
        <rect x="0.5" y="5.5" width="2" height="2" />
        <rect x="4" y="5.5" width="9" height="2" />
        <rect x="0.5" y="10" width="2" height="2" />
        <rect x="4" y="10" width="9" height="2" />
    </svg>
);

const tableRows = [
    ['1234', '678'],
    ['3636', '3034'],
    ['2620', '2536'],
    ['971', '322'],
];

const TableThumb = () => (
    <svg width="70" height="51" viewBox="0 0 70 51">
        <rect x="10.5" y="8.5" width="49" height="36" fill="#fff" stroke="#B5B5B5" />
        <rect x="11" y="9" width="48" height="9" fill="#DDD" />
        <rect x="11" y="27" width="48" height="9" fill="#DDD" />
        <rect x="13" y="12" width="5" height="2" fill="#AAA" />
        <rect x="13" y="21" width="6" height="2" fill="#AAA" />
        <rect x="13" y="31" width="5" height="2" fill="#AAA" />
        {tableRows.map((r, i) => (
            <g key={i} fontSize="5" fill="#777" fontFamily="Liberation Sans, sans-serif">
                <text x="25" y={16 + i * 9}>{r[0]}</text>
                <text x="42" y={16 + i * 9}>{r[1]}</text>
            </g>
        ))}
    </svg>
);

const mapDots = [
    [11, 25, 2.5, '#C9283E'], [18.3, 21.3, 2, '#F4A0A0'], [31.7, 17.3, 2, '#E0525C'], [30.3, 21.3, 2, '#F4A0A0'],
    [35.3, 21.3, 2, '#C9283E'], [47.7, 23, 3, '#C9283E'], [52, 23, 1.5, '#E0525C'], [39, 27.3, 1.5, '#EE8A8A'],
    [51, 26, 1, '#C9283E'], [52.7, 29.7, 2, '#D6404E'], [18, 30.7, 1.5, '#C9283E'], [24, 32.3, 2, '#F4A0A0'],
    [56, 35.7, 1.5, '#C9283E'],
];

const MapThumb = () => (
    <svg width="70" height="51" viewBox="0 0 70 51">
        <g fill="#E2E2E2">
            <polygon points="9,17 18,14 27,13 27,19 22,22 18,28 14,27 10,24" />
            <polygon points="18,30 26,32 25,37 21,44 19,40" />
            <polygon points="31,15 44,13 60,14 63,20 58,26 54,31 49,28 44,26 38,25 31,23" />
            <polygon points="31,25 43,26 44,31 40,40 36,41 34,33" />
            <polygon points="52,33 62,32 62,38 54,38" />
        </g>
        {mapDots.map(([x, y, r, c], i) => <circle key={i} cx={x} cy={y} r={r} fill={c} />)}
    </svg>
);

const BarsThumb = () => (
    <svg width="70" height="51" viewBox="0 0 70 51" fill="#5585AB">
        <rect x="13" y="12" width="24" height="4" />
        <rect x="13" y="20" width="44" height="4" />
        <rect x="13" y="28" width="12" height="4" />
        <rect x="13" y="36" width="35" height="4" />
    </svg>
);

const treeTiles = [
    [13, 11, 21, 15, '#7BA7CB'], [13, 27, 21, 14, '#4F85AC'], [35, 11, 11, 10, '#7BA7CB'], [47, 11, 10, 10, '#A9CFEF'],
    [35, 22, 7, 10, '#F9A69E'], [35, 33, 7, 8, '#E4605A'], [43, 22, 7, 10, '#7BA7CB'], [43, 33, 7, 8, '#A9CFEF'],
    [51, 22, 6, 10, '#A9CFEF'], [51, 33, 6, 4, '#4F85AC'], [51, 38, 6, 3, '#A9CFEF'],
];

const TreeThumb = () => (
    <svg width="70" height="51" viewBox="0 0 70 51">
        {treeTiles.map(([x, y, w, t, c], i) => <rect key={i} x={x} y={y} width={w} height={t} fill={c} />)}
    </svg>
);

const LinesThumb = () => (
    <svg width="70" height="51" viewBox="0 0 70 51" fill="none" strokeWidth="1.3">
        <polyline points="12,19 19,11 31,20 39,16 47,24 59,19" stroke="#FCE4CC" />
        <polyline points="12,22 27,24 37,17 46,29 59,27" stroke="#FCE4CC" />
        <polyline points="12,31 21,37 36,29 47,37 59,34" stroke="#CFDCE9" />
    </svg>
);

const AreaThumb = () => (
    <svg width="70" height="51" viewBox="0 0 70 51">
        <polygon points="10,20 22,12 42,24 60,18 60,44 10,44" fill="#CFDCE9" />
        <polygon points="10,30 22,23 42,34 60,27 60,44 10,44" fill="#FCE4CC" />
        <polygon points="10,35 22,30 42,39 60,33 60,44 10,44" fill="#FEF2E5" />
    </svg>
);

const rings = [[29, 17], [50, 19], [21, 27], [32, 31], [15, 39]];
const crosses = [[42, 12], [38, 24], [53, 29], [24, 37], [42, 35]];

const ScatterThumb = () => (
    <svg width="70" height="51" viewBox="0 0 70 51" fill="none">
        {rings.map(([x, y], i) => <circle key={i} cx={x} cy={y} r="3.4" stroke="#FBDDBF" strokeWidth="1.1" />)}
        {crosses.map(([x, y], i) => (
            <path key={i} d={`M${x - 4} ${y}h8M${x} ${y - 4}v8`} stroke="#CFE6DC" strokeWidth="1.1" />
        ))}
    </svg>
);

const heatCells = [
    [11, 9, 9, '#CDE5DA'], [27, 9, 4, '#FBD9BE'], [32, 9, 4, '#FDE6D3'], [43, 9, 2, '#FBD9BE'], [49, 9, 8, '#FDE6D3'],
    [11, 21, 6, '#E1F1EA'], [18, 21, 3, '#CDE5DA'], [25, 21, 4, '#CDE5DA'], [32, 21, 14, '#E1F1EA'], [51, 21, 8, '#FBD9BE'],
    [11, 34, 2, '#CDE5DA'], [16, 34, 8, '#FDE6D3'], [26, 34, 2, '#FBD9BE'], [30, 34, 4, '#E1F1EA'], [40, 34, 7, '#CDE5DA'], [53, 34, 4, '#FDE6D3'],
];

const HeatThumb = () => (
    <svg width="70" height="51" viewBox="0 0 70 51">
        {heatCells.map(([x, y, w, c], i) => <rect key={i} x={x} y={y} width={w} height="8" fill={c} />)}
    </svg>
);

const thumbs = [
    { Art: TableThumb },
    { Art: MapThumb, state: 'hot' },
    { Art: BarsThumb },
    { Art: TreeThumb, state: 'on' },
    { Art: LinesThumb },
    { Art: AreaThumb },
    { Art: ScatterThumb },
    { Art: HeatThumb },
];

const pills = [
    { Icon: SizeIcon, text: 'SUM(Delivery ..', measure: true },
    { Icon: ColourIcon, text: 'SUM(Delivery ..', measure: true },
    { Icon: TextIcon, text: 'Country' },
    { Icon: TextIcon, text: 'City' },
];

const tabs = [110, 151, 133, 105, 39, 193, 104];

const App = () => (
    <Page>
        <GlobalStyle />
        <TopBar>
            {tabs.map((w, i) => <TopTab key={i} $w={w} $on={i === 4} />)}
        </TopBar>
        <Main>
            <LeftColumn>
                <Card $h={70}><CardTitle>Pages</CardTitle></Card>
                <Card $h={92}><CardTitle>Filters</CardTitle></Card>
                <Card $h={342}>
                    <CardTitle>Marks</CardTitle>
                    <TypeSelect>
                        <TypeBox />
                        <TypeName>Automatic</TypeName>
                        <TypeCaret />
                    </TypeSelect>
                    <MarkGrid>
                        <MarkButton><ColourIcon />Colour</MarkButton>
                        <MarkButton><SizeIcon />Size</MarkButton>
                        <MarkButton><TextIcon />Label</MarkButton>
                        <MarkButton><DetailIcon />Detail</MarkButton>
                        <MarkButton><TooltipIcon />Tooltip</MarkButton>
                    </MarkGrid>
                    <PillList>
                        {pills.map(({ Icon, text, measure }, i) => (
                            <PillRow key={i}>
                                <PillIcon><Icon size={14} /></PillIcon>
                                <Pill $measure={measure}>{text}</Pill>
                            </PillRow>
                        ))}
                    </PillList>
                </Card>
            </LeftColumn>
            <RightColumn>
                <Shelf $top={1}>
                    <ShelfLabel><ColumnsIcon />Columns</ShelfLabel>
                </Shelf>
                <Shelf $top={7}>
                    <ShelfLabel><RowsIcon />Rows</ShelfLabel>
                </Shelf>
                <Sheet>
                    <SheetTitle>Sheet 1</SheetTitle>
                    <Treemap />
                </Sheet>
            </RightColumn>
        </Main>
        <ShowMe>
            <ThumbList>
                {thumbs.map(({ Art, state }, i) => (
                    <Thumb key={i} $state={state}><Art /></Thumb>
                ))}
            </ThumbList>
            <HintLine $top={20}>For<b>treemaps</b></HintLine>
            <HintLine $top={8}>1 or more</HintLine>
            <HintLine $top={10}>1 or 2<HintPill>Measures</HintPill></HintLine>
        </ShowMe>
    </Page>
);

export default App;
